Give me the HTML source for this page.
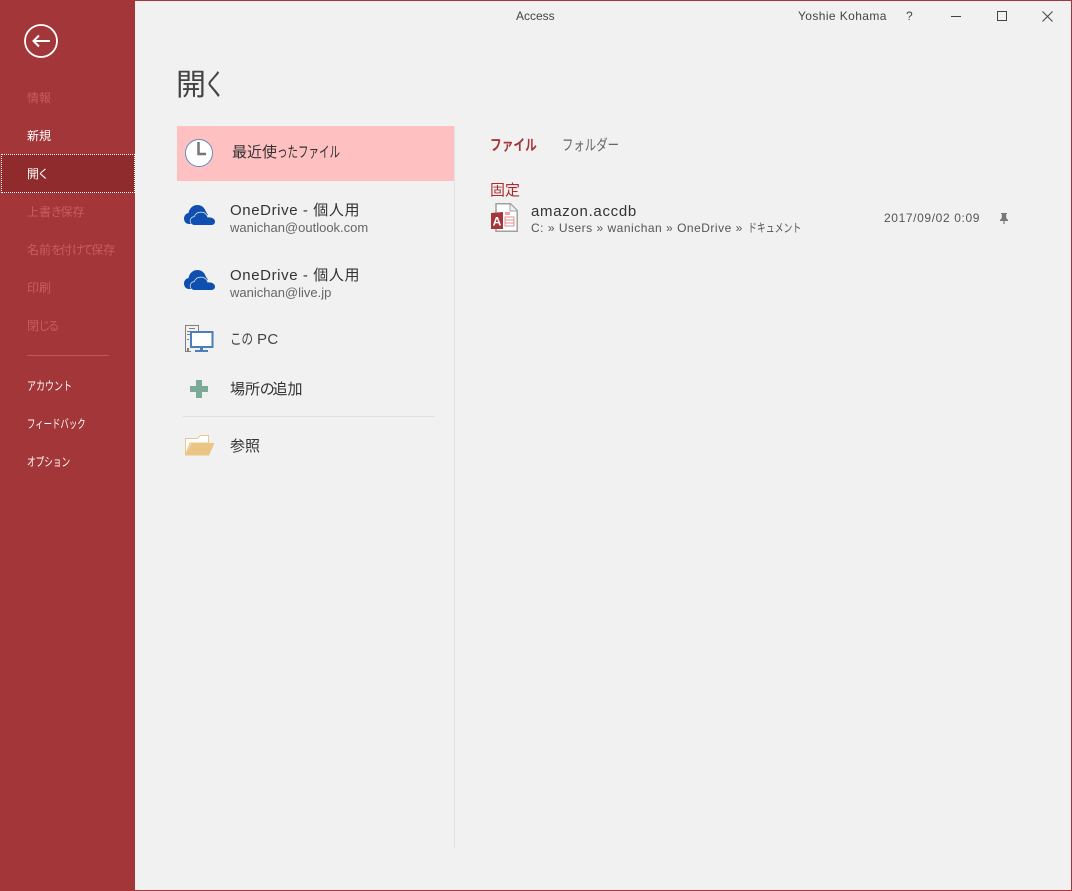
<!DOCTYPE html>
<html lang="ja">
<head>
<meta charset="utf-8">
<title>Access</title>
<style>
html,body{margin:0;padding:0}
body{width:1072px;height:891px;overflow:hidden;position:relative;background:#f1f1f1;font-family:"Liberation Sans","Noto Sans CJK JP",sans-serif;color:#333}
.t{position:absolute;white-space:nowrap;line-height:1}
svg{position:absolute;overflow:visible}
.b{position:absolute}
.n{left:27px;font-size:12px}
.w{color:#fff}
.d{color:#ca5b5f}
.k{font-feature-settings:"palt";letter-spacing:-1px}
.m{font-feature-settings:"palt";letter-spacing:-1.200px}
.s{transform-origin:0 0}
</style>
</head>
<body>
<div class="b" style="left:0;top:0;width:1072px;height:1px;background:#a33639"></div>
<div class="b" style="left:1071px;top:0;width:1px;height:891px;background:#a33639"></div>
<div class="b" style="left:0;top:890px;width:1072px;height:1px;background:#a33639"></div>
<div class="b" style="left:0;top:0;width:135px;height:891px;background:#a33639"></div>
<div class="b" style="left:1px;top:154px;width:132px;height:37px;background:#8f2a2d;border:1px dotted #fff"></div>

<svg style="left:24px;top:24px" width="34" height="34" viewBox="0 0 34 34" fill="none" stroke="#fff"><circle cx="17" cy="17" r="16" stroke-width="1.800"/><path d="M9.500 17H26M15 11.500L9.500 17L15 22.500" stroke-width="2"/></svg>

<div class="t n d" style="top:92px">情報</div>
<div class="t n w" style="top:130px">新規</div>
<div class="t n w" style="top:168px">開<span class="k">く</span></div>
<div class="t n d" style="top:206px">上書<span class="k">き</span>保存</div>
<div class="t n d" style="top:244px">名前<span class="k" style="letter-spacing:-2px">を</span>付<span class="k" style="letter-spacing:-1.800px">けて</span>保存</div>
<div class="t n d" style="top:282px">印刷</div>
<div class="t n d" style="top:320px">閉<span class="k" style="letter-spacing:-1.500px">じる</span></div>
<div class="b" style="left:27px;top:355px;width:82px;height:1px;background:#c4565a"></div>
<div class="t n w s" style="top:380px;transform:scaleX(.75)">アカウント</div>
<div class="t n w s" style="top:418px;transform:scaleX(.7)">フィードバック</div>
<div class="t n w s" style="top:456px;transform:scaleX(.72)">オプション</div>

<div class="t" style="left:516px;top:10px;font-size:12px;color:#444">Access</div>
<div class="t" style="left:798px;top:10px;font-size:12px;color:#444;letter-spacing:.4px">Yoshie Kohama</div>
<div class="t" style="left:906px;top:10px;font-size:12px;color:#444">?</div>
<svg style="left:950px;top:10px" width="100" height="14" viewBox="0 0 100 14" fill="none" stroke="#444" stroke-width="1"><path d="M1 6.500H11"/><rect x="47.500" y="1.500" width="9" height="9"/><path d="M92.500 1.500L102.500 11.500M102.500 1.500L92.500 11.500"/></svg>

<div class="t" style="left:176px;top:71px;font-size:30px;color:#444">開</div>
<div class="t s" style="left:204px;top:71px;font-size:30px;color:#444;transform:scaleX(.72)">く</div>

<div class="b" style="left:177px;top:126px;width:277px;height:55px;background:#fec0c1"></div>
<div class="b" style="left:454px;top:126px;width:1px;height:722px;background:#e1e1e1"></div>

<svg style="left:185px;top:139px" width="28" height="28" viewBox="0 0 28 28" fill="none"><circle cx="14" cy="14" r="13.500" fill="#fff" stroke="#5b8fc7" stroke-width="1"/><path d="M13.500 3V15H21" stroke="#777" stroke-width="2.500"/></svg>
<div class="t" style="left:232px;top:145px;font-size:15px;color:#333">最近使</div>
<div class="t s" style="left:277px;top:145px;font-size:15px;color:#333;transform:scaleX(.7)">ったファイル</div>

<svg style="left:184px;top:205px" width="32" height="21" viewBox="0 0 32 21"><path fill="#0f4fb0" d="M5 19C1.500 19 0 16 0 13.500C0 10.500 2 8.500 4.500 8C5.500 3 9 0 13.500 0C17.500 0 20.500 2.500 21.500 6L24 10L10 19Z"/><path fill="#0f4fb0" stroke="#f1f1f1" stroke-width="1.400" paint-order="stroke" d="M10.500 20C8 20 6.500 18 6.500 16C6.500 13.500 8.500 12 10.500 12C11.500 9 14 7.500 17 7.500C20.500 7.500 23 10 23.500 12.500C27 11.800 31 13.500 31 16.500C31 19 29 20 27.500 20Z"/></svg>
<div class="t" style="left:230px;top:203px;font-size:15px;color:#333;letter-spacing:.6px">OneDrive - 個人用</div>
<div class="t" style="left:230px;top:221px;font-size:13px;color:#666">wanichan@outlook.com</div>

<svg style="left:184px;top:270px" width="32" height="21" viewBox="0 0 32 21"><path fill="#0f4fb0" d="M5 19C1.500 19 0 16 0 13.500C0 10.500 2 8.500 4.500 8C5.500 3 9 0 13.500 0C17.500 0 20.500 2.500 21.500 6L24 10L10 19Z"/><path fill="#0f4fb0" stroke="#f1f1f1" stroke-width="1.400" paint-order="stroke" d="M10.500 20C8 20 6.500 18 6.500 16C6.500 13.500 8.500 12 10.500 12C11.500 9 14 7.500 17 7.500C20.500 7.500 23 10 23.500 12.500C27 11.800 31 13.500 31 16.500C31 19 29 20 27.500 20Z"/></svg>
<div class="t" style="left:230px;top:268px;font-size:15px;color:#333;letter-spacing:.6px">OneDrive - 個人用</div>
<div class="t" style="left:230px;top:286px;font-size:13px;color:#666">wanichan@live.jp</div>

<svg style="left:185px;top:325px" width="29" height="28" viewBox="0 0 29 28" fill="none"><path d="M13.500 6V.5H.5V26.500H6" stroke="#808080"/><path d="M4 3.500H10M2 6.500H5M2 9.500H5M2 14.500H4" stroke="#808080"/><rect x="2" y="23" width="2" height="3" fill="#808080"/><rect x="6" y="7" width="21.500" height="15" fill="#fff" stroke="#4a7fbb" stroke-width="2"/><path d="M15 22H18V25H23V27H10V25H15Z" fill="#4a7fbb"/></svg>
<div class="t s" style="left:230px;top:332px;font-size:15px;color:#444;transform:scaleX(.77)">この</div>
<div class="t" style="left:257px;top:332px;font-size:15px;color:#444;letter-spacing:.4px">PC</div>

<svg style="left:190px;top:380px" width="18" height="18" viewBox="0 0 18 18"><path fill="#7bab98" d="M6 0H12V6H18V12H12V18H6V12H0V6H6Z"/></svg>
<div class="t" style="left:230px;top:382px;font-size:15px;color:#333">場所<span class="m" style="letter-spacing:-2px">の</span>追加</div>

<div class="b" style="left:183px;top:416px;width:251px;height:1px;background:#dfdfdf"></div>

<svg style="left:185px;top:435px" width="30" height="21" viewBox="0 0 30 21"><path d="M.5 19.500V3.500H12.500L15.500 .5H23.500V8H5L.5 19.500Z" fill="#fff" stroke="#edc88a"/><path d="M0 20.500H24L29.500 8H6.500Z" fill="#eac584"/></svg>
<div class="t" style="left:230px;top:439px;font-size:15px;color:#333">参照</div>

<div class="t s" style="left:490px;top:138px;font-size:15px;font-weight:bold;color:#a4373a;transform:scaleX(.78)">ファイル</div>
<div class="t s" style="left:562px;top:138px;font-size:15px;color:#666;transform:scaleX(.76)">フォルダー</div>
<div class="t" style="left:490px;top:183px;font-size:15px;color:#b02a2e">固定</div>

<svg style="left:491px;top:203px" width="28" height="30" viewBox="0 0 28 30" fill="none"><path d="M5 .8H19.500L26.200 7.500V28.200H5Z" fill="#fff" stroke="#a0a0a0" stroke-width="1.500"/><path d="M19 1V8H26" fill="#f1f1f1" stroke="#a0a0a0"/><rect x="14" y="9" width="5" height="3" fill="#e8a6a8"/><rect x="14" y="14" width="9" height="9" fill="#fff" stroke="#e08f92"/><path d="M14 17H23M14 20H23" stroke="#e08f92"/><path d="M0 10L12 9V26L0 26Z" fill="#a4373a"/><text x="6" y="22.500" font-family="Liberation Sans" font-size="12" font-weight="bold" fill="#fff" text-anchor="middle">A</text></svg>

<div class="t" style="left:531px;top:204px;font-size:15px;color:#333;letter-spacing:.7px">amazon.accdb</div>
<div class="t" style="left:531px;top:222px;font-size:12px;color:#555;letter-spacing:.5px">C: » Users » wanichan » OneDrive »</div>
<div class="t s" style="left:748px;top:222px;font-size:12px;color:#555;transform:scaleX(.74)">ドキュメント</div>
<div class="t" style="left:884px;top:212px;font-size:12px;color:#555;letter-spacing:.62px">2017/09/02 0:09</div>
<svg style="left:999px;top:213px" width="10" height="11" viewBox="0 0 10 11"><path fill="#777" d="M2 0H8V1H7.200V5L9 7V8H5.600V11H4.400V8H1V7L2.800 5V1H2Z"/></svg>
</body>
</html>
